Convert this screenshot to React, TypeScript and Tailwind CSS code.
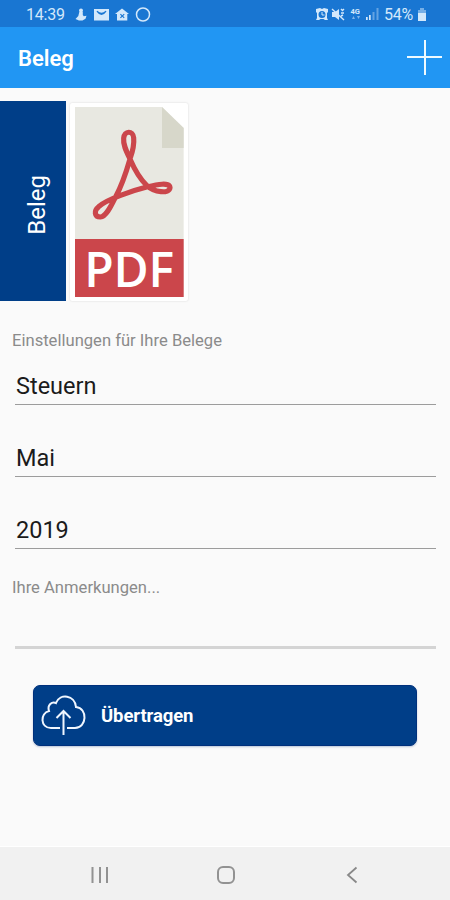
import React from 'react';

function StatusBar() {
  return (
    <header className="flex h-[27px] items-center bg-[#1976d2] pl-[26px] pr-[23px] pt-[2px] text-[#d3e8fb]">
      <span className="w-[49px] text-[16px] leading-none tracking-[-0.2px]">14:39</span>
      <svg className="h-[16px] w-[78px]" viewBox="0 0 78 16" fill="currentColor">
        <circle cx="6" cy="3.5" r="2" />
        <path d="M4.300 5h3.500v3l1 1.200 2.700-.4-1 3-3 1.700H4L.500 12l2.800-3z" />
        <path fillRule="evenodd" d="M19 2h15v11.500H19zM21.500 4.500q5 7 10 0l-.8-.8q-4.200 4-8.400 0z" />
        <path fillRule="evenodd" d="M47 1.500l7 5.500h-1.700v6.500H42V7h-2zM45 7.500l1.500 1.500L45 10.500l.8.800 1.500-1.500 1.500 1.500.8-.8L48.100 9l1.500-1.500-.8-.8-1.500 1.500-1.500-1.500z" />
        <circle cx="68" cy="7.500" r="6.500" fill="none" stroke="currentColor" strokeWidth="1.500" />
      </svg>
      <svg className="ml-auto h-[16px] w-[66px]" viewBox="0 0 66 16" fill="currentColor">
        <path fillRule="evenodd" d="M1 2l4-1 2 1 2-1 4 1v3l-1 1v5l1 2h-3l-1.500-1h-3L4 13H1l1-2V6L1 5zM7 4a3.500 3.500 0 100 7 3.500 3.500 0 000-7z" />
        <path d="M7 5v3h2.500" fill="none" stroke="currentColor" />
        <path d="M17 5h3l4-3v11l-4-3h-3z" />
        <path d="M17 2l12 11M26 2l1.500 1.500L29 2M26 6h3M26 9l2-1" fill="none" stroke="currentColor" strokeWidth="1.400" />
        <text x="35.500" y="6.800" fontSize="7.500" fontWeight="700">4G</text>
        <path d="M37 12l1.500-3 1.500 3zM42 9h3l-1.500 3z" opacity=".55" />
        <path d="M51 10h1.700v3H51zM54 8h1.700v5H54z" />
        <path d="M57.500 5h2v8h-2zM61.500 1h2v12h-2z" opacity=".4" />
      </svg>
      <span className="ml-[3px] w-[31px] whitespace-nowrap text-[16px] leading-none tracking-[-0.3px]">54%</span>
      <svg className="ml-[2px] h-[14px] w-[10px]" viewBox="0 0 10 14" fill="currentColor">
        <path d="M3 0h4v2h2v3H1V2h2z" opacity=".5" />
        <path d="M1 5h8v8H1z" />
      </svg>
    </header>
  );
}

function PdfPreview() {
  return (
    <div className="flex h-[198px] w-[118px] items-center justify-center rounded-[2px] bg-white shadow-[0_0_2px_#d0d0d0]">
      <div className="grid h-[190px] w-[109px]">
        <svg className="col-start-1 row-start-1 h-[190px] w-[109px]" viewBox="225 49 327 570">
          <path d="M225 49H486L551 112V619H225Z" fill="#e8e8e1" />
          <path d="M486 49L551 112V172H486Z" fill="#d7d7ca" />
          <path
            d="M390 205C378 180 369 162 371 143C373 119 399 119 401 141C403 160 397 185 390 205C379 243 365 286 347 318C333 346 319 377 301 379C283 379 281 360 296 348C319 326 400 299 440 289C470 282 509 273 510 291C508 310 463 306 440 284C416 261 403 235 390 205Z"
            fill="none"
            stroke="#cb464b"
            strokeWidth="15.500"
            strokeLinejoin="round"
          />
          <rect x="225" y="445" width="326" height="174" fill="#cb464b" />
        </svg>
        <span className="col-start-1 row-start-1 self-end whitespace-nowrap pb-[2px] text-center font-['Open_Sans',sans-serif] text-[48px] font-semibold leading-[52px] tracking-[-0.2px] text-white">PDF</span>
      </div>
    </div>
  );
}

function Field({ value }: { value: string }) {
  return (
    <div className="mb-[32px] flex h-[40px] items-center border-b border-[#9c9c9c] pl-[1px] pt-[5px] text-[23.5px] leading-none text-[#1b1b1b]">
      {value}
    </div>
  );
}

export default function App() {
  return (
    <div className="flex h-[900px] w-[450px] flex-col overflow-hidden bg-[#fafafa] font-[Roboto,sans-serif]">
      <StatusBar />
      <nav className="flex h-[61px] items-center justify-between bg-[#2196f3] pl-[18px] pr-[7px] text-white">
        <h1 className="pt-[2px] text-[22px] font-semibold leading-none">Beleg</h1>
        <svg className="h-[36px] w-[36px]" viewBox="0 0 36 36" fill="none" stroke="#eefaff" strokeWidth="2">
          <path d="M18 0V35M0 17H35" />
        </svg>
      </nav>
      <main className="flex-1">
        <div className="mt-[13px] flex h-[200px] items-center gap-[4px]">
          <div className="flex h-full w-[66px] items-center justify-center bg-[#003e88] pl-[7px] pt-[8px]">
            <span className="rotate-180 text-[24px] leading-none text-white [writing-mode:vertical-rl]">Beleg</span>
          </div>
          <div className="pt-[1px]">
            <PdfPreview />
          </div>
        </div>
        <p className="mt-[31px] pl-[12px] text-[16.6px] leading-[18px] text-[#8b8b8b]">Einstellungen für Ihre Belege</p>
        <div className="ml-[15px] mr-[14px] mt-[15px]">
          <Field value="Steuern" />
          <Field value="Mai" />
          <Field value="2019" />
        </div>
        <p className="-mt-[2px] pl-[12px] text-[16.6px] leading-[18px] text-[#8b8b8b]">Ihre Anmerkungen...</p>
        <div className="ml-[15px] mr-[14px] mt-[49px] h-[3px] bg-[#d4d4d4]" />
        <button className="ml-[33px] mt-[36px] flex h-[61px] w-[384px] items-center rounded-[7px] border border-[#00307c] bg-[#003e88] pl-[7px] text-white shadow-[0_1px_2px_#b8c5d8]">
          <svg className="h-[42px] w-[46px]" viewBox="0 0 46 42" fill="none" stroke="#eff6ff" strokeWidth="2">
            <path d="M19 33H10C-1 33 -1 18 8 16C6 10 11 6 15 8C19 -2 34 0 35 12C47 13 46 33 34 33H26" />
            <path d="M22.500 40V17M15.500 23L22.500 16L29.500 23" />
          </svg>
          <span className="ml-[14px] pt-[1px] text-[18.500px] font-bold leading-none tracking-[-0.1px]">Übertragen</span>
        </button>
      </main>
      <footer className="grid h-[54px] shrink-0 grid-cols-3 items-center border-t border-white bg-[#f1f1f1]">
        <div className="flex justify-center pl-[50px] pt-[2px]">
          <svg className="h-[18px] w-[18px]" viewBox="0 0 18 18" stroke="#929292" strokeWidth="2">
            <path d="M1.500 1V17M9 1V17M16 1V17" />
          </svg>
        </div>
        <div className="flex justify-center pl-[2px] pt-[2px]">
          <div className="h-[18px] w-[18px] rounded-[6px] border-2 border-[#929292]" />
        </div>
        <div className="flex justify-center pr-[46px] pt-[2px]">
          <svg className="h-[18px] w-[12px]" viewBox="0 0 12 18" fill="none" stroke="#888" strokeWidth="1.800">
            <path d="M10.500 1.500L2 9L10.500 16.500" />
          </svg>
        </div>
      </footer>
    </div>
  );
}
